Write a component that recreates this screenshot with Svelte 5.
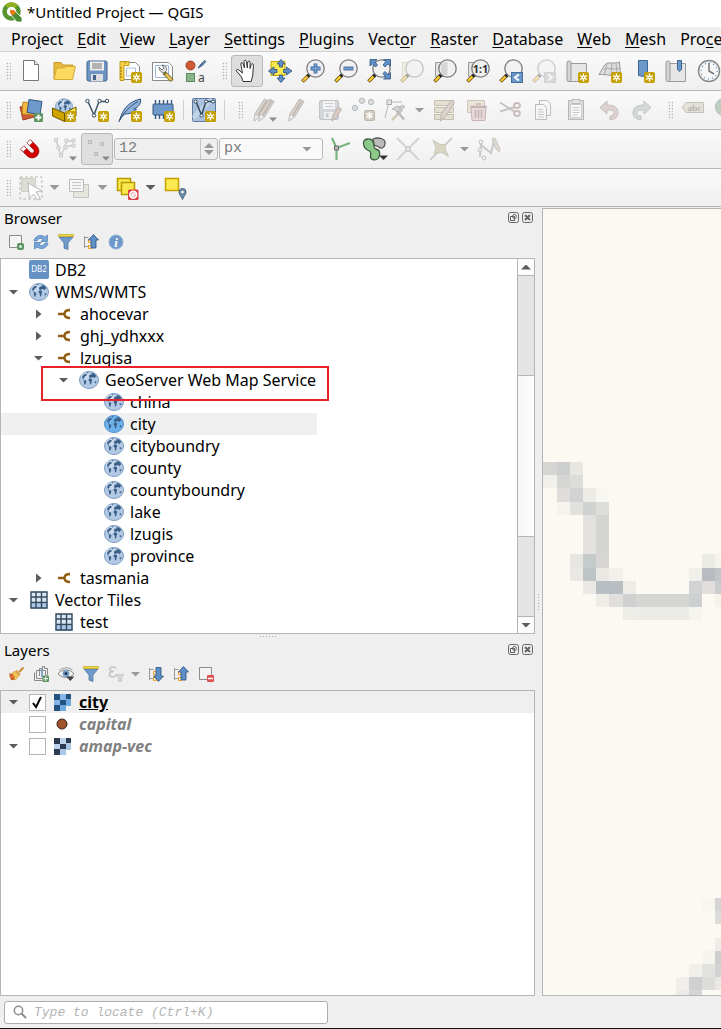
<script>
  const star = '<rect x="13" y="13" width="11" height="11" rx="2" fill="#c4a000"/><path d="M18.5 14.5v8M15 16.5l7 4M22 16.5l-7 4" stroke="#fff" stroke-width="1.4"/><circle cx="18.5" cy="18.5" r="1.9" fill="#fff"/><circle cx="18.5" cy="18.5" r=".8" fill="#c4a000"/>';
  const lens = (inner = '') =>
    '<path d="M1.5 22.5L7.5 16.5" stroke="#5d4a12" stroke-width="3.8"/><path d="M2 22L7 17" stroke="#fcc92f" stroke-width="2.4"/><path d="M6.5 17.500L9 15" stroke="#222" stroke-width="3.200"/><circle cx="14.500" cy="9.500" r="8.700" fill="#f0f0f0" fill-opacity=".88" stroke="#7b7b7b" stroke-width="1.300"/>' + inner;
  const dropMark = '<path d="M17 19.500h8l-4 4.200z" fill="#8a8a8a"/>';
  const pencil = (x) => `<g transform="translate(${x} 0)"><path d="M14.500 1l4.500 2.500-9.500 15.500-5.500 4 .8-7z" fill="#d9d3cd" stroke="#bdb8b3"/><path d="M16.500 3l-9 15" stroke="#c0b5ae" stroke-width="1.500"/><path d="M5 16l4.500 3-5.500 4z" fill="#eee" stroke="#bbb" stroke-width=".7"/></g>`;
  const blueArrow = (d) => `<path d="${d}" fill="#5f8fc7" stroke="#2c4f7b" stroke-width=".8" stroke-linejoin="round"/>`;
  const scroll = '<path d="M4.500 4.500h17v18h-17z" fill="#e6e6e6" stroke="#9a9a9a"/><path d="M2 3c1-1.500 4-1.500 4 .5V21c0 2-4 2-4 .3z" fill="#d4d4d4" stroke="#9a9a9a"/>';
  const continents = '<g fill="#3a5f87"><path d="M3 6.500l1.500-2.300 2-1 1.300.8-.6 1.500-1.400.3-.6 1.700-1 .3 1 1.400-1-.2z"/><path d="M4.800 9.500l2 .6.5 1.500-1.300 2.600-.8-.3-.2-2.200z"/><path d="M7.500 1.700l1.800-.3-.8 1.800z"/><path d="M10 5.500l.8-1.600 1.700.3.3-1.700 2.200.5 1.700 1.500.8 2-1.500-.3-.5 1.700-1-1.200-1.300-.2-1 .8-1.700.2z"/><path d="M9.800 8.200l2.200-.3 1.300 1.300-.7 1.700-.5 2.800-1.100.3-.3-3-1.100-1z"/><path d="M15.500 11l1.700-.2.2 1.500-1.500.8z"/></g>';
  const globe = '<ellipse cx="10" cy="9.500" rx="9.500" ry="8.500" fill="#b3c9e4" stroke="#7b9cc3"/><ellipse cx="7" cy="5.500" rx="5" ry="3.500" fill="#dce8f5" opacity=".55"/>' + continents;
  const treeLines = '<path d="M1.500 2v12M1.500 3.500h4M1.500 12.500h4" fill="none" stroke="#999"/><path d="M5.500 5.500h3v3h-3zM5.500 11.500h3v3h-3z" fill="#fff2cf" stroke="#f39c24"/>';
  const funnel = '<path d="M1 3h14L10 9v6.500l-4-1.300V9z" fill="#6f9acb" stroke="#47709f" stroke-width=".7"/><path d="M.5.500h15v2H.5z" fill="#f2d83c" stroke="#b99f16" stroke-width=".6"/>';
  const gridIcon = '<path d="M1 1h17v17H1z" fill="#dbe8f4"/><path d="M1 13h17v5H1z" fill="#a9c8ea"/><path d="M1.500 1v17M6.500 1v17M12 1v17M17.500 1v17M1 1.500h17M1 6.500h17M1 12h17M1 17.500h17" stroke="#34495e" stroke-width="1.400"/>';
  const checker = (a, b, c) => `<path d="M0 0h17v12h-5v5H0z" fill="${b}"/><path d="M0 0h6v6H0zM12 0h5v5h-5zM6 6h6v5H6zM0 11h6v6H0z" fill="${a}"/><path d="M6 0h6v6H6zM0 6h6v5H0z" fill="${c}"/>`;

  const icons = {
    newdoc: '<path d="M4.500 1.500h11l4 4v16h-15z" fill="#fff" stroke="#777"/><path d="M15.500 1.500v4h4" fill="#eee" stroke="#777"/>',
    open: '<path d="M2 20V3.500h7l2 2.500h10v4" fill="#e5b93a" stroke="#c9992a"/><path d="M2 20.500L4.500 9h8l1.500-1.500h9.500L20.500 20.500z" fill="#fcd95f" stroke="#d9ab37"/>',
    save: '<rect x="2" y="2" width="20" height="20" rx="1.500" fill="#6d94c2" stroke="#43658d"/><rect x="5" y="2.500" width="14" height="9" fill="#eee"/><path d="M7 5h10M7 7h10M7 9h10" stroke="#777"/><rect x="6" y="15" width="12" height="7" fill="#dedede"/><rect x="8" y="16" width="3" height="5" fill="#43658d"/>',
    newlayout: '<path d="M2.500 3.500h15l4 4v13h-19z" fill="#fff" stroke="#888"/><path d="M2 2.500h9v4H6v15H2z" fill="#fbd04a" stroke="#c39c1b"/><path d="M2 9h2M2 12h2M2 15h2M2 18h2M7 2.500v2" stroke="#8f7000"/><path d="M8.500 9h9v8h-9z" fill="#fff" stroke="#a8bedd"/>' + star,
    layouts: '<path d="M1.500 3.500h16l4 4v14h-20z" fill="#fff" stroke="#888"/><path d="M4.500 6.500h13v12h-13z" fill="#fff" stroke="#9bb7df"/><path d="M13 13.500l8 8" stroke="#6f6222" stroke-width="4"/><path d="M14.500 15l6 6" stroke="#e7c75c" stroke-width="2.500"/><path d="M8 8c0 4 2.500 6 5.500 5.500l2-2c.5-3-1.500-5.500-4.500-5.500l2 3-2 2z" fill="#ddd" stroke="#777"/>',
    style: '<circle cx="6.500" cy="6.500" r="4.500" fill="#cf5b33" stroke="#974020"/><path d="M14 9l3-4 4-3.500.8 1-3.500 4z" fill="#6f95c4" stroke="#34577e"/><rect x="2.500" y="14.500" width="8" height="8" fill="#8ab58c" stroke="#5b8960"/><text x="14" y="22.500" font-family="Noto Sans" font-size="12" fill="#444">a</text>',
    hand: '<path d="M8 22.500L6.500 18 1.500 12c-.4-1.500 1-2 2-1.200L7.500 14 5.800 5c0-1.600 1.900-1.900 2.300-.3L9.500 9 9 2.500C9 .8 11.200.8 11.500 2.500L12.300 9l.4-5.800c.2-1.500 2.300-1.400 2.400.2L15 9.500l1.200-4c.5-1.300 2.300-.8 2.200.6L17.800 16l-1.600 6.500z" fill="#fff" stroke="#333" stroke-linejoin="round"/>',
    pan: '<path d="M3 2.500h14v14H3z" fill="#fce94f" stroke="#c4a000"/>' + blueArrow('M13 .5l4 4.500h-2.500v3h-3V5H9zM13 23.500l4-4.500h-2.500v-3h-3v3H9zM.5 12L6 8v2.500h3v3H6V16zM24 12l-5.500-4v2.500h-3v3h3V16z'),
    zoomin: lens('<path d="M14.500 4.500v10M9.500 9.500h10" stroke="#3f6596" stroke-width="3.800"/><path d="M14.500 5v9M10 9.500h9" stroke="#729fcf" stroke-width="2"/>'),
    zoomout: lens('<path d="M9.500 9.500h10" stroke="#3f6596" stroke-width="3.800"/><path d="M10 9.500h9" stroke="#729fcf" stroke-width="2"/>'),
    zoomfull: lens(blueArrow('M3 .5h7L7.800 2.700 10.500 6 8.500 8 5.500 4.800 3 7zM23.500.5h-7l2.200 2.200-2.700 3.300 2 2 3-3.200 2.500 2.200zM23.500 20h-7l2.200-2.200L16 14.500l2-2 3 3.200 2.500-2.200z')),
    zoomsel: '<g opacity=".4"><path d="M2.500 3.500h9v14h-9z" fill="#ece7cb" stroke="#b6b096"/>' + lens() + '</g>',
    zoomlayer: '<path d="M2.500 3.500h11v14h-11z" fill="#e3e3e3" stroke="#999"/>' + lens('<path d="M14.500 3v13H10L8 13V5z" fill="#d5d5d5"/>'),
    zoomnative: '<path d="M2.500 3.500h11v14h-11z" fill="#e3e3e3" stroke="#999"/>' + lens('<text x="14.500" y="13.500" text-anchor="middle" font-family="Noto Sans" font-weight="700" font-size="11" fill="#333">1:1</text>'),
    zoomlast: lens('<rect x="12.500" y="13.500" width="11" height="10" fill="#6b96c8" stroke="#44709f"/><path d="M20 15.500l-4 3 4 3" fill="none" stroke="#fff" stroke-width="2"/>'),
    zoomnext: '<g opacity=".35">' + lens('<rect x="12.500" y="13.500" width="11" height="10" fill="#aaa" stroke="#999"/><path d="M16 15.500l4 3-4 3" fill="none" stroke="#fff" stroke-width="2"/>') + '</g>',
    newmap: scroll + star,
    new3d: '<path d="M1 15.500C4 11 6 5 9.500 4c4-.5 8 1 12-1l1 13c-7 2-13-1-21.500-.5z" fill="#ddd" stroke="#999"/><path d="M6 10c5-1.500 10 1 16-.5M9 4.500L6.500 15M14 4.500L13 17M18 4l1 12" stroke="#aaa" fill="none"/>' + star,
    bookmark: '<path d="M7.500 1.500h9v20l-4-4-5-1z" fill="#6d98ca" stroke="#3e648f"/>' + star,
    bookmarks: scroll + '<path d="M13.500 1.500h4v9l-2 2-2-2z" fill="#6d98ca" stroke="#3e648f"/>',
    clock: '<circle cx="12" cy="12" r="10.500" fill="#f7f7f7" stroke="#888" stroke-width="1.500"/><circle cx="12" cy="12" r="8" fill="none" stroke="#5f8fc7" stroke-width="1.500" stroke-dasharray="1 3.190"/><path d="M12 4v8l5 3" fill="none" stroke="#777" stroke-width="1.500"/>',
    addlayer: '<path d="M1 9l11-2 3 12-11 3z" fill="#cf5b33" stroke="#9b3f1c"/><path d="M4 4l12 1-1 12-12-1z" fill="#f5b942" stroke="#bb8723"/><path d="M10 1.500l13 2-2 13-13-2z" fill="#6d98ca" stroke="#34577e"/><rect x="15" y="15" width="9" height="9" rx="1.500" fill="#5b9460"/><path d="M19.500 16.500v6M16.500 19.500h6" stroke="#fff" stroke-width="1.800"/>',
    geopackage: '<g transform="translate(3 0) scale(.9)">' + globe + '</g><path d="M.5 10l12 5v8.500l-12-5.500z" fill="#d0a400" stroke="#6e5700"/><path d="M12.500 15L24 9v9l-11.500 5.500z" fill="#fce94f" stroke="#6e5700"/>' + star,
    shapefile: '<path d="M2.500 2.500L9 17 14 3.500h9" fill="none" stroke="#3f566b" stroke-width="1.500"/><g fill="#fff" stroke="#34495e"><circle cx="2.500" cy="3" r="1.700"/><circle cx="9" cy="17.500" r="1.700"/><circle cx="14.500" cy="3" r="1.700"/><circle cx="22" cy="3" r="1.700"/></g>' + star,
    feather: '<path d="M1 23.500C4 16 6 5 22.500 1c1 6-4 9-7 10l3 .2c-3 4-8 4.800-12 4.800L3 20z" fill="#8fb0d9" stroke="#34577e"/><path d="M1 23.500C6 14 12 8 20 3.500" fill="none" stroke="#34577e"/>' + star,
    memory: '<path d="M4.500 2v19M8.500 2v19M12.500 2v19M16.500 2v19M20.500 2v12" stroke="#34577e" stroke-width="1.400"/><rect x="2" y="6" width="20" height="11" rx="1" fill="#6d98ca" stroke="#34577e"/>' + star,
    virtual: '<rect x=".500" y=".500" width="23" height="23" rx="1" fill="#a9c1dd" stroke="#5d7b9e"/><path d="M1 20L20 1" stroke="#d9e5f2" stroke-width="5" opacity=".5"/><path d="M4 3.500L9.500 17 14 3.500h7" fill="none" stroke="#34495e" stroke-width="1.500"/><g fill="#fff" stroke="#34495e"><circle cx="3.500" cy="3.500" r="1.500"/><circle cx="9.500" cy="17.500" r="1.500"/><circle cx="14" cy="3.500" r="1.500"/><circle cx="21" cy="3.500" r="1.500"/></g>' + star,
    pencils: pencil(-2) + pencil(3) + dropMark,
    pencil: pencil(0),
    savefade: '<rect x="1.500" y="2.500" width="19" height="19" rx="1.500" fill="#d2d5d9" stroke="#c0c2c5"/><path d="M5 3h12v8H5z" fill="#f4f4f4"/><path d="M7 5.500h8M7 8.500h8" stroke="#ccc"/><path d="M6 14h10v7H6z" fill="#eee"/><path d="M8 15.500h2.500v4H8z" fill="#c4c7ca"/><path d="M20 9l3.500 2-5.500 9-4 3 .5-5z" fill="#d8cbc5" stroke="#bdb4af"/>',
    points: '<g fill="#d9dcde" stroke="#b9bcbf"><circle cx="4" cy="10" r="2.700"/><circle cx="11" cy="2.800" r="2.700"/><circle cx="20" cy="4" r="2.700"/></g><rect x="13.500" y="12.500" width="10" height="10" rx="1" fill="#cfc9bd" stroke="#bdb7aa"/><path d="M18.500 14v7M15.500 15.700l6 3.600M21.500 15.700l-6 3.600" stroke="#fff" stroke-width="1.500"/>',
    vertex: '<path d="M1 20L5 4h13" fill="none" stroke="#bbb"/><rect x="3" y="2" width="4.500" height="4.500" fill="#e5e5e5" stroke="#aaa"/><path d="M8 22l10-10" stroke="#cfc9b8" stroke-width="2.500"/><path d="M12 12l8 9.500" stroke="#bbb" stroke-width="2.500"/><path d="M8 11l5-3 4 1-3 5-3-2zM15 9l4-2 2 2-4 3z" fill="#d3d3d3" stroke="#bbb"/>',
    modify: '<g fill="#e3e0d2" stroke="#c4c0ad"><path d="M2.500 2.500h19v5h-19zM2.500 9.500h19v5h-19zM2.500 16.500h19v5h-19z"/></g>' + '<path d="M19.500 2l3 2-9 15-5 4 .5-6.500z" fill="#dbd2cd" stroke="#bdb4af"/>',
    trash: '<path d="M2.500 2.500h17v12h-17z" fill="#e8e4d8" stroke="#cbc5b6"/><path d="M6 9.500h15l-1 13H7z" fill="#e6d9d9" stroke="#c7b3b3"/><path d="M5 8.500h17M11 6h5M10.500 12v8M13.500 12v8M16.500 12v8" stroke="#c7b3b3" stroke-width="1.500"/>',
    cut: '<path d="M2 4.500l15 9.500M2 13.500L17 9" stroke="#c3c3c3" stroke-width="2"/><g fill="none" stroke="#c9bcbc" stroke-width="1.800"><ellipse cx="19" cy="7.500" rx="3" ry="2.500"/><ellipse cx="19" cy="15.500" rx="3" ry="2.500"/></g>',
    copy: '<g fill="#f6f6f6" stroke="#bdbdbd"><path d="M8.500 2.500h8l3 3v12h-11z"/><path d="M4.500 6.500h8l3 3v12h-11z"/></g><path d="M7 11.500h5M7 14h6M7 16.500h6M7 19h6" stroke="#c6c6c6"/>',
    paste: '<rect x="4.500" y="2.500" width="15" height="19" fill="#ddd" stroke="#bdb7b4"/><path d="M6.500 6.500h11v13h-11z" fill="#fafafa" stroke="#ccc"/><path d="M8 1.500h8v4H8z" fill="#e5e5e5" stroke="#bbb"/><path d="M8.500 9.500h7M8.500 12h7M8.500 14.500h7M8.500 17h5" stroke="#c6c6c6"/>',
    undo: '<path d="M3 9.500L10 3v4c7 0 11 2.500 11 8 0 4-3 6.500-8 6.500v-3.500c3 0 4-1 4-3 0-2.300-2-3-7-3v4z" fill="#ddd1d1" stroke="#c8bcbc"/>',
    redo: '<path d="M21 9.500L14 3v4C7 7 3 9.500 3 15c0 4 3 6.500 8 6.500v-3.500c-3 0-4-1-4-3 0-2.300 2-3 7-3v4z" fill="#d3d9d7" stroke="#bfc5c3"/>',
    label: '<path d="M1 9.500l4-5h17.500v10H5z" fill="#e3e1d8" stroke="#c5c3b9"/><text x="13.500" y="13" text-anchor="middle" font-family="Liberation Serif" font-weight="700" font-size="9" fill="#b5b5b0">abc</text>',
    diagram: '<circle cx="10" cy="9" r="8.500" fill="#bcd0c4" stroke="#b5bbb8"/><path d="M10 9V.5A8.500 8.500 0 0 1 18.500 9z" fill="#d8c6c6"/>',
    magnet: '<g transform="translate(2 3) rotate(-45 11 10) scale(.86)"><path d="M4 3v9.500a8 8 0 0 0 16 0V3h-5.500v9.500a2.500 2.500 0 0 1-5 0V3z" fill="#d40000" stroke="#8b0000" stroke-width=".8"/><path d="M4 1.500h5.500V6H4zM14.500 1.500H20V6h-5.500z" fill="#fff" stroke="#a33" stroke-width=".9"/></g>',
    vfade: '<path d="M4 3l5 16 4-9 9-2M12 10l3-6h7" fill="none" stroke="#cfcfcf" stroke-width="1.500"/><g fill="#eee" stroke="#c6c6c6"><path d="M2.500 1.500h3v3h-3zM7.500 17h3v3h-3zM13 2h3v3h-3zM20 2h3v3h-3zM12 9h3v3h-3zM20 7h3v3h-3zM5 9h3v3H5z"/></g>' + dropMark,
    snap: '<g fill="#d8d8d8" stroke="#b5b5b5"><path d="M3.500 3.500h3v3h-3zM15.500 5.500h3v3h-3zM9.500 15.500h3v3h-3z"/></g>' + dropMark,
    topo: '<path d="M6.500 11L2 1M6.500 11L20 6M6.500 11v12" fill="none" stroke="#79b57c" stroke-width="2.200"/><path d="M4.500 9h4v4h-4z" fill="#bbb" stroke="#666"/>',
    overlap: '<path d="M10 2c5-2 13-1 12 5-.5 4-4 5-6 3l-5-2z" fill="#bbb" stroke="#555" stroke-width="1.300"/><path d="M.5 7c-1-6 8-7 10-1 .8 3 0 5 2 6 5 1 5 5 3 9-2 3-8 2-8-1 0-3 1-5-1-6C3.500 13 1 11 .5 7z" fill="#8cc88b" stroke="#3e5a3f" stroke-width="1.300"/><path d="M16 18.500h9l-4.500 4.500z" fill="#333"/>',
    xfade: '<path d="M1 1l22 22M23 1L1 23" stroke="#d2d2d2" stroke-width="1.800"/><path d="M10 10h4v4h-4z" fill="#eee" stroke="#bbb"/>',
    trace: '<path d="M1 23L23 1" stroke="#ccc" stroke-width="1.800"/><path d="M4 3l7 4.500h6l-1 4 3.500 8-6.500-4-8 1 2-5z" fill="#d9d5c3" stroke="#ccc9b8"/>',
    nfade: '<path d="M4 4l-1 15M4 7l10 8 3-12" fill="none" stroke="#c9c9c9" stroke-width="2" transform="translate(0 1)"/><g fill="#eee" stroke="#c4c4c4"><circle cx="4" cy="5" r="2"/><circle cx="3" cy="13" r="2"/><circle cx="7" cy="21" r="2"/></g><path d="M15 2l3-1 5 11-1 3-3-3z" fill="#dddacd" stroke="#c9c7bc"/>',
    select: '<path d="M1 1h22v22H1z" fill="none" stroke="#b7b7b7" stroke-dasharray="3 2"/><path d="M2.500 2.500h14v13h-14z" fill="#deddd5" stroke="#cfcdc3"/><path d="M9 7l14 8-6 1 4 6-2.500 2-4-6-4 4z" fill="#fff" stroke="#bbb"/>',
    form: '<path d="M6.500 8.500h15v13h-15z" fill="#e5e4dd" stroke="#c6c5bd"/><path d="M2.500 3.500h14v12h-14z" fill="#f7f7f7" stroke="#bbb"/><path d="M5 6.500h9M5 9.500h9M5 12.500h9" stroke="#c4c4c4"/>',
    deselect: '<path d="M2.500 2.500h13v12h-13z" fill="#fce94f" stroke="#b79a00" stroke-width="1.500"/><path d="M6.500 6.500h13v12h-13z" fill="#fce94f" stroke="#b79a00" stroke-width="1.500"/><rect x="13" y="13.500" width="10.500" height="10.500" rx="1.500" fill="#dc3a40"/><circle cx="18.200" cy="18.800" r="3.600" fill="#f4c6c8" stroke="#fff" stroke-width="1.300"/><path d="M15.500 21.500l5.500-5.500" stroke="#fff" stroke-width="1.300"/>',
    selectloc: '<path d="M2.500 2.500h13v12h-13z" fill="#fce94f" stroke="#c4a000" stroke-width="1.500"/><path d="M19.500 23.500c-1-3-3.500-5-3.500-7.500a3.500 3.500 0 0 1 7 0c0 2.500-2.500 4.500-3.500 7.500z" fill="#6f8ca6" stroke="#47637d"/><circle cx="19.500" cy="16" r="1.300" fill="#fff"/>',

    addsel: '<path d="M1.500 1.500h12v12h-12z" fill="#f3f3f3" stroke="#8b8b8b"/><rect x="9" y="9" width="7" height="7" rx="2" fill="#5b9460"/><circle cx="12.500" cy="12.500" r="1.500" fill="#d8ecd8"/>',
    refresh: '<path d="M1 7C1.500 2.500 7-.5 12 3l2.500-2v6.500H8L10 5C7.500 3.500 4.500 5 4 7z" fill="#79a5d8" stroke="#497cb3" stroke-width=".7"/><path d="M15 9c-.5 4.500-6 7.500-11 4l-2.500 2V8.500H8L6 11c2.500 1.500 5.500 0 6-2z" fill="#79a5d8" stroke="#497cb3" stroke-width=".7"/>',
    funnel,
    collapse: treeLines + blueArrow('M10.500.5l5 5.500H13v8H8V6H5.500z'),
    expand: treeLines + blueArrow('M10.500 15.500l5-5.500H13V1.500H8V10H5.500z'),
    info: '<circle cx="8" cy="8" r="7" fill="#6d98ca" stroke="#8fb0d9"/><text x="8" y="12.500" text-anchor="middle" font-family="Liberation Serif" font-style="italic" font-weight="700" font-size="13" fill="#fff">i</text>',
    brush: '<path d="M15.500 1.500L11 6" stroke="#c48b3c" stroke-width="2"/><path d="M7 5l4 5-4 4-6-4z" fill="#f0c654" stroke="#c28c2c" stroke-width=".6"/><path d="M1 7l5 2-3 2z" fill="#cf4b33"/><path d="M2 11l5-1-1 4-3 0z" fill="#d0652a"/><path d="M8 4.500l4 4.500" stroke="#e2a04a" stroke-width="2"/>',
    group: '<g fill="none" stroke="#888"><path d="M1.500 6.500v8h8M3.500 4.500h9v8h-9zM6.500 10V2.500h3v-2h2v2h3V9"/></g><path d="M9 3v8" stroke="#5f8fc7" stroke-width="1.500"/><rect x="9.500" y="9.500" width="6.500" height="6.500" rx="1" fill="#5b9460"/><path d="M12.700 10.500v4.500M10.500 12.700H15" stroke="#fff"/>',
    eye: '<path d="M0 8C3 3 12 2 16 8c-4 4-11 5-16 0z" fill="#f4f4f4" stroke="#888"/><circle cx="8" cy="7.500" r="3.300" fill="#6d98ca"/><circle cx="8" cy="7.500" r="1.300" fill="#223"/><path d="M1 4.500C5 1 11 1 14.500 4" fill="none" stroke="#999"/><path d="M8 10.500h8.500L12.300 15z" fill="#444"/>',
    expr: '<path d="M8 2.500C5-.5 1 1.500 2 4c.5 1.500 2.500 1.500 4 1.500-3 0-5 1-4.500 3.500.5 2.500 5 2.500 7 0" fill="none" stroke="#c4c4c4" stroke-width="1.600"/><path d="M8 8.500h8l-2.500 3v4h-3v-4z" fill="#d9d9d9" stroke="#c9c9c9"/>',
    remove: '<path d="M1.500 1.500h12v12h-12z" fill="#f3f3f3" stroke="#8b8b8b"/><rect x="9" y="9" width="7" height="7" rx="1" fill="#e05252"/><path d="M10 12.500h5" stroke="#fff" stroke-width="1.500"/>',

    db2: '<rect width="20" height="19" rx="2" fill="#6591c4"/><text x="10" y="12" text-anchor="middle" font-family="Noto Sans" font-size="8" fill="#fff">DB2</text>',
    globe: '<g transform="translate(0 .5)">' + globe + '</g>',
    globeOn: '<g transform="translate(0 .5)"><ellipse cx="10" cy="9.500" rx="9.500" ry="8.500" fill="#6db1ea" stroke="#4f8ecb"/>' + continents + '</g>',
    link: '<path d="M4 10h6M16 6c-3.500 0-5.500 1.500-5.500 4s2 4 5.500 4" fill="none" stroke="#915f12" stroke-width="2.500"/>',
    grid: '<g transform="translate(.5 .5)">' + gridIcon + '</g>',
    rasterOn: '<g transform="translate(0 2)">' + checker('#23527f', '#70a9e0', '#83b5e6') + '</g>',
    rasterOff: '<g transform="translate(0 2)">' + checker('#2d3b52', '#abc6e6', '#bdd2ec') + '</g>',
    dot: '<circle cx="8" cy="10" r="5" fill="#a0522d" stroke="#33231c"/>'
  };

  // Text before the mnemonic, the mnemonic, text after it
  const menus = [['Pro', 'j', 'ect'], ['', 'E', 'dit'], ['', 'V', 'iew'], ['', 'L', 'ayer'], ['', 'S', 'ettings'], ['', 'P', 'lugins'], ['Vect', 'o', 'r'], ['', 'R', 'aster'], ['', 'D', 'atabase'], ['', 'W', 'eb'], ['', 'M', 'esh'], ['Pro', 'c', 'essing']];

  const row1 = ['|', 'newdoc', 'open', 'save', 'newlayout', 'layouts', 'style', '||', 'hand*', 'pan', 'zoomin', 'zoomout', 'zoomfull', 'zoomsel', 'zoomlayer', 'zoomnative', 'zoomlast', 'zoomnext', 'newmap', 'new3d', 'bookmark', 'bookmarks', 'clock'];
  const row2 = ['|', 'addlayer', 'geopackage', 'shapefile', 'feather', 'memory', '-', 'virtual', '-', '|', 'pencils', 'pencil', 'savefade', 'points', 'vertex', 'v', 'modify', 'trash', 'cut', 'copy', 'paste', 'undo', 'redo', '||', 'label', 'diagram'];
  const row3a = ['|', 'magnet', 'vfade', 'snap*'];
  const row3b = ['topo', 'overlap', 'xfade', 'trace', 'v', 'nfade'];
  const row4 = ['|', 'select', 'v', 'form', 'v', 'deselect', 'V', 'selectloc'];

  const browser = [
    [0, '', 'db2', 'DB2'], [0, 'open', 'globe', 'WMS/WMTS'], [1, 'closed', 'link', 'ahocevar'], [1, 'closed', 'link', 'ghj_ydhxxx'], [1, 'open', 'link', 'lzugisa'],
    [2, 'open', 'globe', 'GeoServer Web Map Service'], [3, '', 'globe', 'china'], [3, '', 'globeOn', 'city'], [3, '', 'globe', 'cityboundry'], [3, '', 'globe', 'county'],
    [3, '', 'globe', 'countyboundry'], [3, '', 'globe', 'lake'], [3, '', 'globe', 'lzugis'], [3, '', 'globe', 'province'], [1, 'closed', 'link', 'tasmania'],
    [0, 'open', 'grid', 'Vector Tiles'], [1, '', 'grid', 'test']
  ];
  const layers = $state([
    { name: 'city', icon: 'rasterOn', on: true, exp: true },
    { name: 'capital', icon: 'dot', on: false, exp: false },
    { name: 'amap-vec', icon: 'rasterOff', on: false, exp: true }
  ]);

  // Map raster cells: x, y, width, height, colour
  const cells = [
    [0, 253, 14, 13, '#d5d5d3'], [14, 253, 13, 13, '#cdcfcf'], [27, 253, 13, 13, '#e8e7e2'],
    [0, 266, 14, 13, '#f1f0ea'], [14, 266, 13, 13, '#d6d6d4'], [27, 266, 13, 13, '#dcdcd9'],
    [14, 279, 13, 14, '#dedddb'], [27, 279, 13, 14, '#d1d2d2'], [40, 279, 13, 14, '#ecebe6'], [53, 279, 13, 14, '#f7f6f0'],
    [14, 293, 13, 13, '#f5f4ed'], [27, 293, 13, 13, '#e1e2dd'], [40, 293, 13, 13, '#d0d1d1'], [53, 293, 13, 13, '#dddeda'],
    [40, 306, 13, 39, '#e2e1df'], [53, 306, 13, 39, '#d4d4d3'],
    [27, 345, 13, 14, '#e7e6e2'], [40, 345, 13, 14, '#c5caca'], [53, 345, 13, 14, '#d8d6d4'],
    [27, 359, 13, 13, '#e9e8e4'], [40, 359, 13, 13, '#bec3c6'], [53, 359, 13, 13, '#eae8e3'], [66, 359, 14, 13, '#f2f1eb'], [80, 359, 13, 13, '#f9f8f2'],
    [40, 372, 13, 13, '#eae9e5'], [53, 372, 27, 13, '#b9bec2'], [80, 372, 13, 13, '#edece7'],
    [53, 385, 13, 13, '#efede8'], [66, 385, 14, 13, '#e1dfdd'], [80, 385, 13, 13, '#cfd1d1'], [93, 385, 53, 13, '#d5d5d4'], [146, 385, 13, 13, '#cdd0d1'],
    [66, 398, 14, 13, '#faf8f1'], [80, 398, 13, 13, '#edede8'], [93, 398, 53, 13, '#ebebe8'], [146, 398, 13, 13, '#f5f4ee'], [172, 385, 6, 13, '#f4f2eb'],
    [159, 345, 13, 14, '#ecece7'], [172, 345, 6, 14, '#f4f3ed'], [146, 359, 13, 13, '#f0efe9'], [159, 359, 13, 13, '#b8bcc1'], [172, 359, 6, 13, '#c3c6c8'],
    [146, 372, 13, 13, '#d1d2d3'], [159, 372, 13, 13, '#e0dfdd'], [172, 372, 6, 13, '#c9cdce'],
    [159, 689, 13, 13, '#f8f6ee'], [172, 689, 6, 13, '#d4d5d4'], [172, 702, 6, 13, '#dbdcda'], [172, 729, 6, 13, '#edece8'],
    [159, 742, 13, 13, '#f6f4ee'], [172, 742, 6, 13, '#cdcfcf'], [146, 755, 13, 13, '#f0efe9'], [159, 755, 13, 13, '#e2e3de'], [172, 755, 6, 13, '#d1d3d3'],
    [133, 768, 13, 13, '#f0efeb'], [146, 768, 13, 13, '#d0d0d0'], [159, 768, 13, 13, '#dcddd9'], [172, 768, 6, 13, '#eae9e6'], [133, 781, 13, 8, '#ecebe7'], [146, 781, 13, 8, '#d5d5d6']
  ];
</script>

{#snippet tools(items)}
  {#each items as it}
    {#if it === '|' || it === '||'}
      <span class="grip" class:mid={it === '||'}></span>
    {:else if it === '-'}
      <span class="sep"></span>
    {:else if it === 'v' || it === 'V'}
      <button class="drop" class:dark={it === 'V'} aria-label="More options"><span class="down"></span></button>
    {:else}
      <button class="tool" class:pressed={it.endsWith('*')} aria-label={it.replace('*', '')}>
        <svg width="24" height="24" viewBox="0 0 24 24">{@html icons[it.replace('*', '')]}</svg>
      </button>
    {/if}
  {/each}
{/snippet}

{#snippet dockTitle(name)}
  <header class="dock-title">
    <h2>{name}</h2>
    <button class="mini" aria-label="Float"><svg width="11" height="11" viewBox="0 0 11 11"><rect x=".5" y=".5" width="10" height="10" rx="2" /><circle cx="6.500" cy="4.500" r="2" /><rect x="2.500" y="4.500" width="4" height="4" /></svg></button>
    <button class="mini" aria-label="Close"><svg width="11" height="11" viewBox="0 0 11 11"><rect x=".5" y=".5" width="10" height="10" rx="2" /><path d="M3 3l5 5M8 3l-5 5" stroke-width="2" /></svg></button>
  </header>
{/snippet}

{#snippet dockTools(items)}
  <div class="dock-tools">
    {#each items as it}
      {#if it === 'v'}
        <button class="small-drop" aria-label="More options"><span class="down"></span></button>
      {:else}
        <button class="small" aria-label={it}><svg width="16" height="16" viewBox="0 0 16 16">{@html icons[it]}</svg></button>
      {/if}
    {/each}
  </div>
{/snippet}

<div class="app">
  <div class="titlebar">
    <svg width="20" height="20" viewBox="0 0 20 20">
      <circle cx="9.500" cy="9.500" r="7" fill="none" stroke="#589632" stroke-width="4.500" />
      <path d="M4.500 4.500A7 7 0 0 1 14.500 4.500" fill="none" stroke="#93b023" stroke-width="4.500" />
      <path d="M9 9h4l7 7v4h-5l-6-7z" fill="#4d8b32" stroke="#fff" stroke-width=".8" />
      <path d="M8 8h4l2 2.500-3 3L8 11z" fill="#ee7913" />
    </svg>
    <h1>*Untitled Project — QGIS</h1>
  </div>
  <nav class="menubar">
    {#each menus as [before, key, after]}
      <button>{before}<u>{key}</u>{after}</button>
    {/each}
  </nav>
  <div class="toolbar">{@render tools(row1)}</div>
  <div class="toolbar">{@render tools(row2)}</div>
  <div class="toolbar">
    {@render tools(row3a)}
    <div class="spin">
      <input type="text" value="12" aria-label="Snapping tolerance" />
      <span class="steps">
        <button aria-label="Increase"><span class="up"></span></button>
        <button aria-label="Decrease"><span class="down"></span></button>
      </span>
    </div>
    <div class="combo">
      <select aria-label="Snapping unit"><option>px</option></select>
      <span class="down"></span>
    </div>
    {@render tools(row3b)}
  </div>
  <div class="toolbar last">{@render tools(row4)}</div>

  <main>
    <div class="docks">
      <section>
        {@render dockTitle('Browser')}
        {@render dockTools(['addsel', 'refresh', 'funnel', 'collapse', 'info'])}
        <div class="view">
          <ul class="tree">
            {#each browser as [level, state, icon, name]}
              <li class:current={name === 'city'} style="padding-left: {level * 25}px">
                {#if state}
                  <button class="exp" aria-label="Toggle {name}"><span class={state === 'open' ? 'down' : 'right'}></span></button>
                {:else}
                  <span class="exp"></span>
                {/if}
                <svg width="20" height="20" viewBox="0 0 20 20">{@html icons[icon]}</svg>
                <span class="name">{name}</span>
                {#if level === 2}<span class="highlight"></span>{/if}
              </li>
            {/each}
          </ul>
          <div class="scrollbar">
            <button aria-label="Scroll up"><span class="up"></span></button>
            <div class="track"><div class="thumb"></div></div>
            <button aria-label="Scroll down"><span class="down"></span></button>
          </div>
        </div>
      </section>
      <div class="hsplit"><span></span></div>
      <section class="grow">
        {@render dockTitle('Layers')}
        {@render dockTools(['brush', 'group', 'eye', 'funnel', 'expr', 'v', 'expand', 'collapse', 'remove'])}
        <div class="view">
          <ul class="tree layers">
            {#each layers as l, i}
              <li class:current={i === 0}>
                {#if l.exp}
                  <button class="exp" aria-label="Toggle {l.name}"><span class="down"></span></button>
                {:else}
                  <span class="exp"></span>
                {/if}
                <input id="layer-{i}" type="checkbox" bind:checked={l.on} />
                <svg width="17" height="20" viewBox="0 0 17 20">{@html icons[l.icon]}</svg>
                <label for="layer-{i}" class="name" class:off={i > 0}>{l.name}</label>
              </li>
            {/each}
          </ul>
        </div>
      </section>
    </div>
    <div class="vsplit"><span></span></div>
    <div class="map">
      <svg width="100%" height="100%" shape-rendering="crispEdges">
        {#each cells as [x, y, w, h, c]}
          <rect {x} {y} width={w} height={h} fill={c} />
        {/each}
      </svg>
    </div>
  </main>

  <footer>
    <label class="locator">
      <svg width="14" height="14" viewBox="0 0 14 14"><circle cx="5.500" cy="5.500" r="4.200" fill="none" stroke="#8d8d8d" stroke-width="1.500" /><path d="M8.500 8.500L13 13" stroke="#8d8d8d" stroke-width="2" /></svg>
      <input type="text" placeholder="Type to locate (Ctrl+K)" aria-label="Locate" />
    </label>
  </footer>
</div>

<style>
  :global(body) { margin: 0; background: #efefef; }
  .app {
    display: flex;
    flex-direction: column;
    height: 100vh;
    box-sizing: border-box;
    border-bottom: 1px solid #111;
    overflow: hidden;
    background: #efefef;
    color: #000;
    font-family: 'Noto Sans', 'Open Sans', sans-serif;
    font-size: 16px;
    line-height: 22px;
  }
  .app * { box-sizing: border-box; }
  button { appearance: none; border: 0; padding: 0; margin: 0; background: none; color: inherit; font: inherit; display: flex; align-items: center; justify-content: center; flex: none; }
  h1, h2 { margin: 0; font-size: 15px; font-weight: 400; }
  svg { flex: none; display: block; }
  .titlebar { display: flex; align-items: center; gap: 5px; height: 27px; padding: 0 0 4px 2px; background: #fff; flex: none; }
  .menubar { display: flex; gap: 14px; height: 25px; padding-left: 11px; border-bottom: 1px solid #cfcfcf; flex: none; overflow: hidden; }
  .menubar button { white-space: pre; }
  u { text-underline-offset: 2px; text-decoration-thickness: 1px; }
  .toolbar { display: flex; align-items: center; gap: 1px; height: 39px; padding-left: 6px; border-bottom: 1px solid #b5b5b5; background: linear-gradient(#fafafa, #efefef); flex: none; overflow: hidden; }
  .toolbar.last { height: 38px; }
  .tool { width: 32px; height: 32px; border-radius: 3px; }
  .tool svg { overflow: visible; }
  .pressed { background: #dedede; border: 1px solid #b9b9b9; }
  .grip { width: 5px; height: 18px; margin-right: 3px; flex: none; background: radial-gradient(circle, #b4b4b4 35%, transparent 50%) 0 0 / 3px 3px; }
  .grip.mid { margin-left: 9px; margin-right: 3px; }
  .sep { width: 1px; height: 20px; margin: 0 3px; background: #cfcfcf; flex: none; }
  .sep + .grip { margin: 0 4px 0 9px; }
  .drop { width: 15px; height: 32px; margin-left: -1px; }
  .down, .up, .right { display: block; flex: none; background: #999; }
  .down { width: 10px; height: 5px; clip-path: polygon(0 0, 100% 0, 50% 100%); }
  .up { width: 10px; height: 5px; clip-path: polygon(0 100%, 100% 100%, 50% 0); }
  .right { width: 6px; height: 10px; clip-path: polygon(0 0, 0 100%, 100% 50%); }
  .dark .down, .exp .down, .exp .right, .scrollbar .up, .scrollbar .down { background: #5c5c5c; }
  .spin, .combo { display: flex; align-items: center; width: 104px; height: 22px; border: 1px solid #b9b9b9; border-radius: 3px; flex: none; font-family: 'Liberation Mono', monospace; font-size: 15px; color: #7b7b7b; }
  .spin { background: #efefef; }
  .spin input { width: 86px; height: 20px; border: 0; border-right: 1px solid #c4c4c4; background: none; padding: 0 4px; font: inherit; color: inherit; outline: 0; }
  .steps { display: grid; gap: 2px; width: 16px; justify-items: center; }
  .combo { background: #f9f9f9; padding-right: 10px; margin-right: 2px; }
  .combo select { appearance: none; flex: 1; border: 0; background: none; padding: 0 4px; font: inherit; color: inherit; }
  main { flex: 1; display: grid; grid-template-columns: 535px 7px 1fr; min-height: 0; }
  .docks { display: flex; flex-direction: column; min-height: 0; }
  section { display: flex; flex-direction: column; flex: none; }
  .grow { flex: 1; min-height: 0; }
  .grow .view { flex: 1; }
  .dock-title { display: flex; align-items: center; gap: 3px; height: 21px; padding: 0 2px 0 4px; }
  .dock-title h2 { flex: 1; }
  .mini svg { fill: none; stroke: #666; }
  .dock-tools { display: flex; align-items: center; height: 30px; padding: 0 0 2px 3px; }
  .small { width: 25px; height: 25px; }
  .small-drop { width: 15px; height: 25px; }
  .view { display: flex; border: 1px solid #b5b5b5; background: #fff; min-height: 0; }
  .tree { list-style: none; margin: 0; padding: 0; flex: 1; }
  .tree li { position: relative; display: flex; align-items: center; height: 22px; white-space: pre; }
  .tree:not(.layers) li.current { width: 316px; background: #f0f0f0; }
  .layers li.current { background: #efefef; }
  .exp { width: 25px; height: 22px; margin-right: 3px; flex: none; }
  .name { margin-left: 6px; }
  .layers .name { margin-left: 8px; font-weight: 700; text-decoration: underline; }
  .layers .name.off { font-style: italic; text-decoration: none; color: #808080; }
  .layers input { appearance: none; width: 17px; height: 17px; margin: 0 8px 0 0; border: 1px solid #b5b5b5; background: #fff; }
  .layers input:checked { background: #fff url("data:image/svg+xml,%3Csvg xmlns='http://www.w3.org/2000/svg' viewBox='0 0 15 15'%3E%3Cpath d='M3 8l3 4 5-10' fill='none' stroke='black' stroke-width='2'/%3E%3C/svg%3E"); }
  .highlight { position: absolute; z-index: 1; left: 40px; top: -3px; width: 288px; height: 35px; border: 2px solid #e8222b; pointer-events: none; }
  .scrollbar { display: flex; flex-direction: column; width: 17px; border-left: 1px solid #b5b5b5; background: #e4e4e4; }
  .scrollbar button { height: 16px; background: #fcfcfc; }
  .track { flex: 1; padding: 99px 0 79px; border: solid #b5b5b5; border-width: 1px 0; display: flex; }
  .thumb { flex: 1; border: solid #b5b5b5; border-width: 1px 0; background: linear-gradient(90deg, #f5f5f5, #fff); }
  .hsplit { height: 5px; display: flex; align-items: center; justify-content: center; flex: none; }
  .hsplit span { width: 16px; height: 1px; background: repeating-linear-gradient(90deg, #aaa 0 1px, transparent 1px 3px); }
  .vsplit { display: flex; align-items: center; justify-content: center; }
  .vsplit span { width: 1px; height: 16px; background: repeating-linear-gradient(#aaa 0 1px, transparent 1px 3px); }
  .map { margin-top: 1px; border: 1px solid #b5b5b5; border-right: 0; background: #fcf9f2; overflow: hidden; min-height: 0; }
  footer { display: flex; align-items: center; height: 32px; padding-left: 4px; flex: none; }
  .locator { display: flex; align-items: center; gap: 7px; width: 324px; height: 23px; padding-left: 8px; border: 1px solid #adadad; border-radius: 3px; background: #fff; }
  .locator input { flex: 1; min-width: 0; border: 0; padding: 0; outline: 0; background: none; font: 13px 'Liberation Mono', monospace; }
  .locator input::placeholder { color: #b4b4b4; font-style: italic; }
</style>
